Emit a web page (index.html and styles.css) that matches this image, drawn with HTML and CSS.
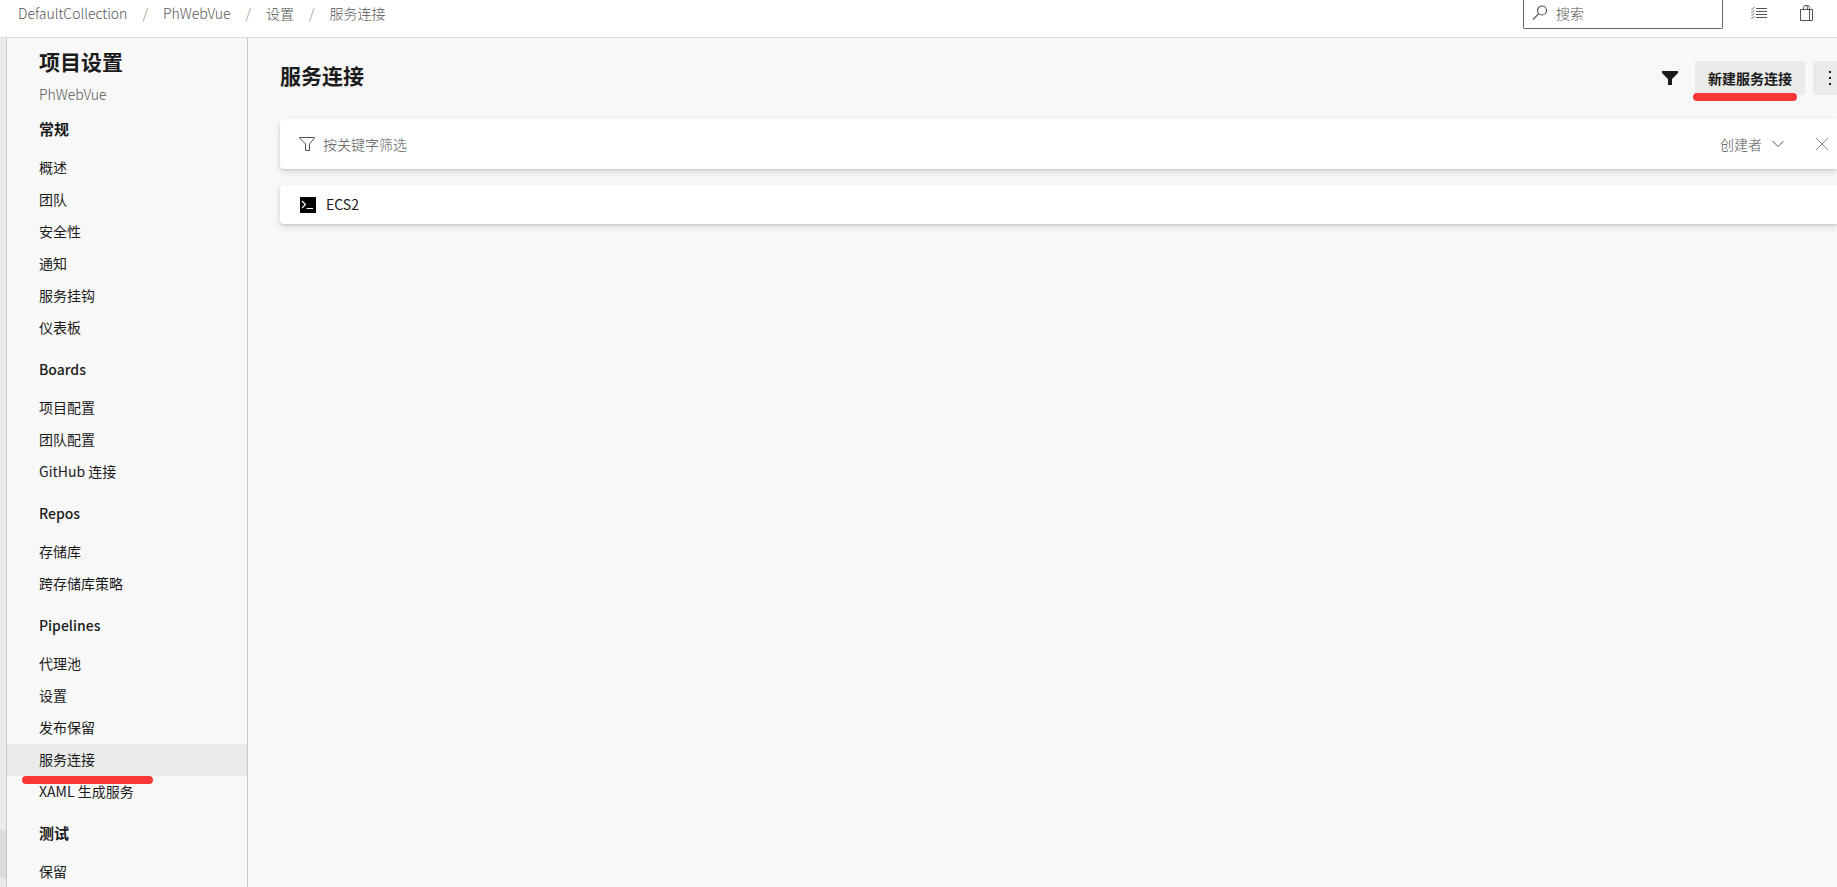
FILE: index.html
```
<!DOCTYPE html>
<html lang="zh-CN">
<head>
<meta charset="UTF-8">
<meta name="viewport" content="width=device-width, initial-scale=1.0">
<title>服务连接 - 设置</title>
<link rel="stylesheet" href="styles.css">
</head>
<body>
<header class="header">
    <nav class="breadcrumb" aria-label="导航路径">
        <a href="#">DefaultCollection</a>
        <span class="separator">/</span>
        <a href="#">PhWebVue</a>
        <span class="separator">/</span>
        <a href="#">设置</a>
        <span class="separator">/</span>
        <a href="#">服务连接</a>
    </nav>
    <div class="header-actions">
        <label class="search">
            <svg width="16" height="16" viewBox="0 0 16 16" fill="none" stroke="currentColor" stroke-width="1.2"><circle cx="10" cy="5.5" r="4.5"/><path d="M6.8 8.7L1 14.5"/></svg>
            <input type="text" placeholder="搜索" aria-label="搜索">
        </label>
        <button class="icon-button" type="button" aria-label="工作项">
            <svg width="16" height="16" viewBox="0 0 16 16" fill="none" stroke="currentColor"><path d="M5 3.5h11M5 6.5h11M5 9.5h11M5 12.5h11"/><path d="M0 3.5l1 1 2.5-2.5M0 6.5l1 1 2.5-2.5M0 9.5l1 1 2.5-2.5M0 12.5l1 1 2.5-2.5" stroke-width=".9"/></svg>
        </button>
        <button class="icon-button" type="button" aria-label="市场">
            <svg width="16" height="16" viewBox="0 0 16 16" fill="none" stroke="currentColor"><path d="M1.5 4.5h12v11h-12zM10.5 4.5v11M4.5 4.5v-2q0-2 2-2t2 2v2M6.5 .5h2q2 0 2 2v2"/></svg>
        </button>
    </div>
</header>
<div class="page">
    <div class="rail"><div class="rail-item"></div></div>
    <aside class="sidebar">
        <h2 class="sidebar-title">项目设置</h2>
        <div class="sidebar-project">PhWebVue</div>
        <nav>
            <h3 class="group-title">常规</h3>
            <a class="item" href="#">概述</a>
            <a class="item" href="#">团队</a>
            <a class="item" href="#">安全性</a>
            <a class="item" href="#">通知</a>
            <a class="item" href="#">服务挂钩</a>
            <a class="item" href="#">仪表板</a>
            <h3 class="group-title group-title-latin">Boards</h3>
            <a class="item" href="#">项目配置</a>
            <a class="item" href="#">团队配置</a>
            <a class="item" href="#">GitHub 连接</a>
            <h3 class="group-title group-title-latin">Repos</h3>
            <a class="item" href="#">存储库</a>
            <a class="item" href="#">跨存储库策略</a>
            <h3 class="group-title group-title-latin">Pipelines</h3>
            <a class="item" href="#">代理池</a>
            <a class="item" href="#">设置</a>
            <a class="item" href="#">发布保留</a>
            <a class="item item-selected" href="#" aria-current="page">服务连接<span class="mark mark-item"></span></a>
            <a class="item" href="#">XAML 生成服务</a>
            <h3 class="group-title">测试</h3>
            <a class="item" href="#">保留</a>
        </nav>
    </aside>
    <main class="main">
        <div class="title-bar">
            <h1 class="title">服务连接</h1>
            <button class="icon-button filter-toggle" type="button" aria-label="筛选">
                <svg width="16" height="16" viewBox="0 0 16 16" fill="currentColor"><path d="M0 1h16v2l-6 6v6H6V9L0 3z"/></svg>
            </button>
            <button class="button" type="button">新建服务连接<span class="mark mark-button"></span></button>
            <button class="button button-more" type="button" aria-label="更多">
                <svg width="16" height="16" viewBox="0 0 16 16" fill="currentColor"><path d="M7 1h2v2H7zM7 7h2v2H7zM7 13h2v2H7z"/></svg>
            </button>
        </div>
        <div class="card filter-bar">
            <label class="keyword">
                <svg width="16" height="16" viewBox="0 0 16 16" fill="none" stroke="currentColor"><path d="M.5 1.5h15v.5l-5 6v6.5h-4V8L.5 2z"/></svg>
                <input type="text" placeholder="按关键字筛选" aria-label="按关键字筛选">
            </label>
            <button class="creator" type="button">创建者
                <svg width="12" height="12" viewBox="0 0 12 12" fill="none" stroke="currentColor"><path d="M.5 3L6 8.5 11.5 3"/></svg>
            </button>
            <button class="icon-button clear" type="button" aria-label="清除">
                <svg width="12" height="12" viewBox="0 0 12 12" fill="none" stroke="currentColor"><path d="M0 0l12 12M12 0L0 12"/></svg>
            </button>
        </div>
        <a class="card connection" href="#">
            <svg width="16" height="16" viewBox="0 0 16 16" fill="none" stroke="#fff" stroke-width="1.2"><path d="M0 0h16v16H0z" fill="#000" stroke="none"/><path d="M2 4l3.5 3.5L2 11M6.5 11.5H13"/></svg>
            <span class="connection-name">ECS2</span>
        </a>
    </main>
</div>
</body>
</html>
```
FILE: styles.css
```
* {
    box-sizing: border-box;
}

body {
    margin: 0;
    height: 100vh;
    display: flex;
    flex-direction: column;
    overflow: hidden;
    font-family: "Noto Sans CJK SC", sans-serif;
    font-size: 14px;
    font-weight: 300;
    line-height: 20px;
    color: #1b1b1b;
    background-color: #f8f8f8;
}

h1, h2, h3 {
    margin: 0;
}

a {
    color: inherit;
    text-decoration: none;
}

button,
input {
    font: inherit;
    color: inherit;
    border: none;
    background: none;
    padding: 0;
}

input {
    min-width: 0;
    flex: 1;
    outline: none;
}

input::placeholder {
    color: #555;
    opacity: 1;
}

svg {
    display: block;
    flex: none;
}

.header {
    display: flex;
    justify-content: space-between;
    height: 38px;
    padding: 0 22px 0 18px;
    flex: none;
    background-color: #fff;
    border-bottom: 1px solid #dedede;
    color: #555;
}

.breadcrumb {
    display: flex;
    gap: 15px;
    padding-top: 3px;
}

.separator {
    color: #888;
}

.header-actions {
    display: flex;
    align-items: flex-start;
    gap: 32px;
}

.header-actions .icon-button {
    padding-top: 5px;
}

.search {
    display: flex;
    align-items: center;
    gap: 8px;
    width: 200px;
    height: 29px;
    margin-right: -4px;
    padding: 0 8px 2px;
    border: 1px solid #666;
    border-top: none;
    border-radius: 0 0 2px 2px;
}

.page {
    display: flex;
    flex: 1;
    min-height: 0;
}

.rail {
    display: flex;
    align-items: flex-end;
    width: 7px;
    flex: none;
    padding-bottom: 9px;
    background-color: #eaeaea;
    border-right: 1px solid #c8c8c8;
}

.rail-item {
    width: 6px;
    height: 48px;
    background-color: #dcdcdc;
}

.sidebar {
    width: 241px;
    flex: none;
    border-right: 1px solid #c8c8c8;
}

.sidebar-title {
    padding: 9px 32px 0;
    font-size: 21px;
    line-height: 28px;
}

.sidebar-project {
    padding: 9px 32px 0;
    height: 29px;
    color: #555;
}

.group-title {
    height: 48px;
    padding: 15px 32px 0;
    font-size: 15px;
}

.group-title-latin {
    font-size: 14px;
    font-weight: 500;
}

.item {
    display: block;
    position: relative;
    height: 32px;
    padding: 5px 32px;
    font-weight: 400;
}

.item-selected {
    background-color: #eaeaea;
}

/* red marker strokes */
.mark {
    position: absolute;
    height: 8px;
    border-radius: 4px;
    background-color: #fc3737;
}

.mark-item {
    left: 15px;
    top: 32px;
    width: 131px;
    z-index: 1;
}

.mark-button {
    left: -2px;
    top: 32px;
    width: 104px;
}

.main {
    flex: 1;
    min-width: 0;
    padding: 23px 0 0 32px;
    overflow: hidden;
}

.title-bar {
    display: flex;
    align-items: center;
    gap: 8px;
    margin-right: -10px;
    margin-bottom: 24px;
}

.title {
    flex: 1;
    padding-bottom: 6px;
    font-size: 21px;
    line-height: 28px;
}

.button {
    position: relative;
    height: 34px;
    padding: 0 13px;
    border-radius: 2px;
    background-color: #eaeaea;
    font-weight: bold;
}

.button-more {
    padding: 0 9px;
}

.filter-toggle {
    margin-right: 9px;
}

.card {
    display: flex;
    align-items: center;
    background-color: #fff;
    border-radius: 4px 0 0 4px;
    box-shadow: 0 3px 7px rgba(0, 0, 0, .13), 0 1px 2px rgba(0, 0, 0, .11);
}

.filter-bar {
    height: 50px;
    margin-bottom: 16px;
    padding: 0 9px 0 19px;
    color: #555;
}

.keyword {
    display: flex;
    align-items: center;
    flex: 1;
    gap: 8px;
}

.creator {
    display: flex;
    align-items: center;
    gap: 10px;
    margin-right: 32px;
}

.clear {
    color: #888;
}

.connection {
    height: 39px;
    padding: 0 20px;
    gap: 10px;
}

.connection-name {
    padding-bottom: 2px;
    font-weight: 400;
}
```
